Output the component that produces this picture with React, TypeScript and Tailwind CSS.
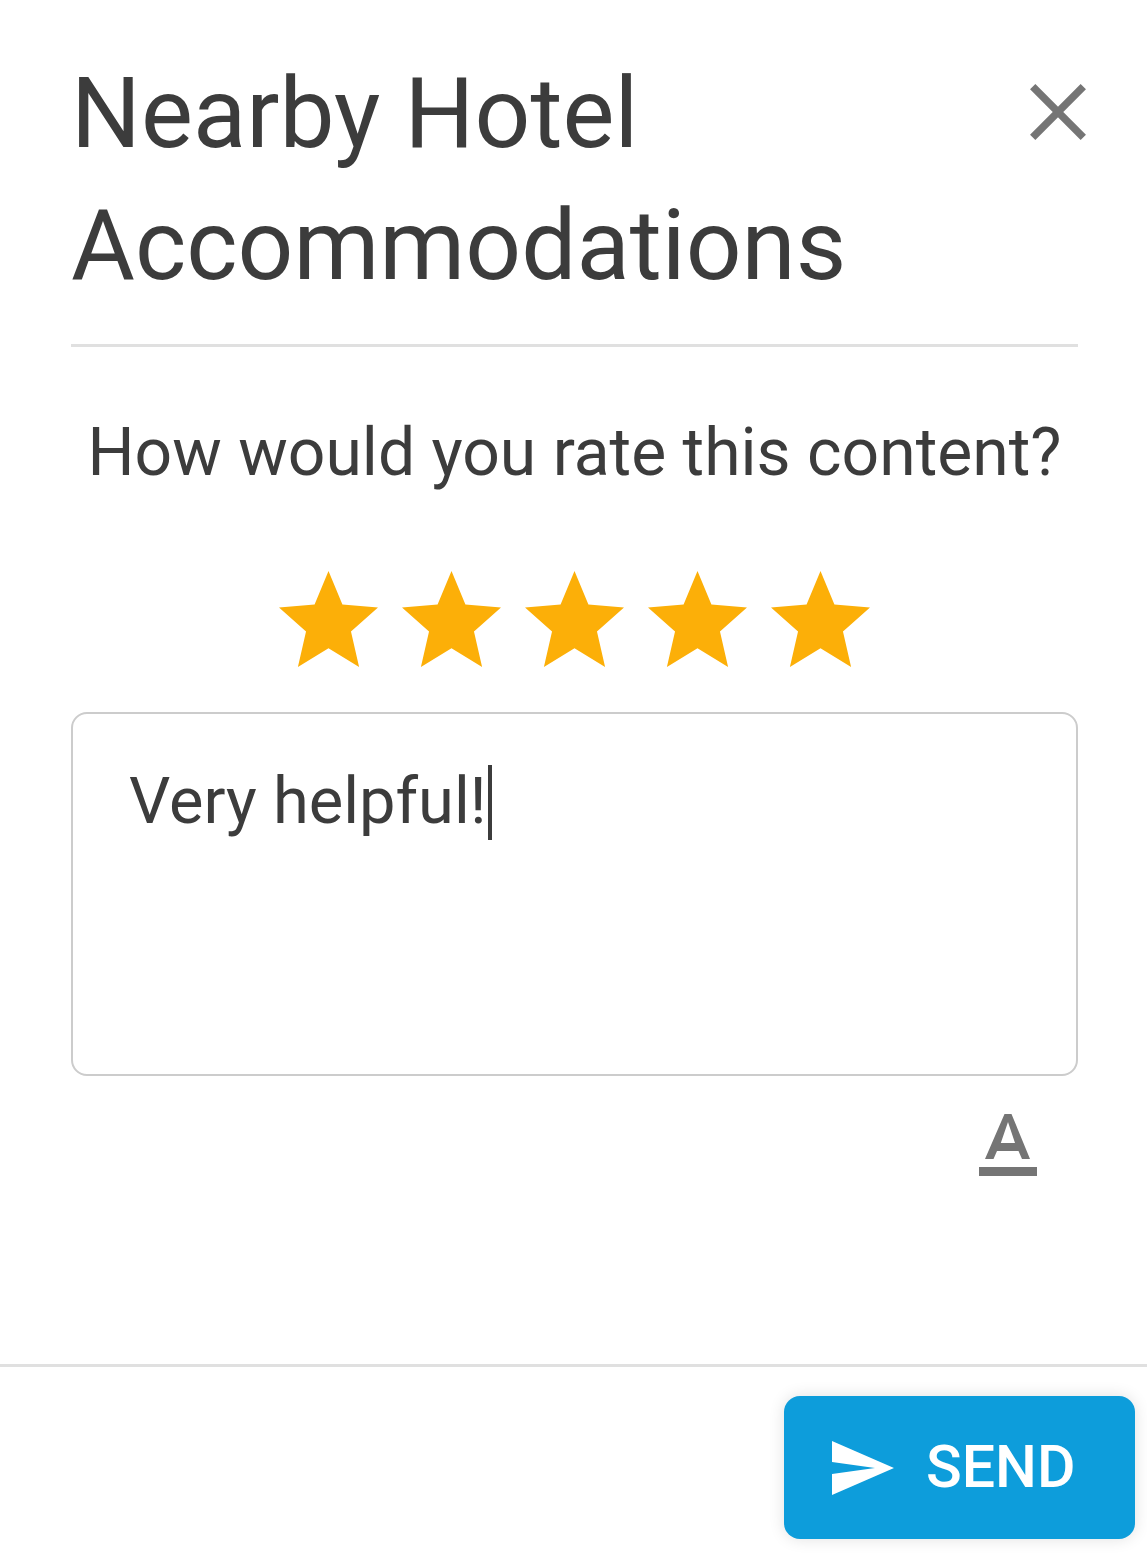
import { useState } from "react";

export default function App() {
  const [rating, setRating] = useState(5);
  const [focused, setFocused] = useState(false);
  return (
    <main className="bg-white font-['Roboto',sans-serif] text-[#3c3c3c]">
      <div className="pt-12 pr-[69px] pl-[71px]">
        <header className="flex items-start justify-between border-b-3 border-[#e0e0e0] pb-8">
          <h1 className="text-[98px] leading-[132px] font-normal">Nearby Hotel Accommodations</h1>
          <button type="button" aria-label="Close" className="-mr-2 mt-9 shrink-0">
            <svg viewBox="0 0 56 56" className="size-14" fill="none" stroke="#757575" strokeWidth="7.5">
              <path d="M2.7 2.7 53.3 53.3M53.3 2.7 2.7 53.3" />
            </svg>
          </button>
        </header>
        <h2 className="mt-16 text-center text-[66px] leading-[84px] font-normal">How would you rate this content?</h2>
        <div className="mt-19 flex justify-center gap-6">
          {[1, 2, 3, 4, 5].map((n) => (
            <button key={n} type="button" aria-label={`${n} stars`} onClick={() => setRating(n)}>
              <svg viewBox="2 2 20 19" className="h-24 w-[99px]" preserveAspectRatio="none" fill={n <= rating ? "#fcaf08" : "#e0e0e0"}>
                <path d="M12 17.27 18.18 21l-1.64-7.03L22 9.24l-7.19-.61L12 2 9.19 8.63 2 9.24l5.46 4.73L5.82 21z" />
              </svg>
            </button>
          ))}
        </div>
        <div className="relative mt-[45px]">
          <textarea
            aria-label="Comment"
            defaultValue="Very helpful!"
            onFocus={() => setFocused(true)}
            className="block h-[364px] w-full resize-none rounded-2xl border-2 border-[#ccc] px-14 py-[45px] text-[65px] leading-[84px] outline-none"
          />
          {!focused && <span className="pointer-events-none absolute top-[53px] left-[417px] h-[75px] w-1 bg-[#3c3c3c]" />}
        </div>
        <div className="mt-[38px] flex justify-end pr-[41px]">
          <button type="button" aria-label="Text color">
            <svg viewBox="0 0 58 62" className="h-[62px] w-[58px]" fill="#757575">
              <path d="M0 53H58V62H0Z" />
              <path fillRule="evenodd" d="M25.5 0H32.5L51 45H43L39.5 37H18L14.5 45H6ZM21.8 29H36L29 8Z" />
            </svg>
          </button>
        </div>
      </div>
      <footer className="mt-[188px] flex justify-end border-t-3 border-[#e0e0e0] pt-[29px] pr-3 pb-4">
        <button type="button" className="flex h-[143px] w-[351px] items-center gap-8 rounded-2xl bg-[#0d9ddb] pl-12 text-[59px] font-medium text-white shadow-[0_0_16px_rgba(0,0,0,0.12)]">
          <svg viewBox="0 0 62 54" className="h-[54px] w-[62px]" fill="white">
            <path d="M0 0 62 27 0 54V33L43 27 0 21Z" />
          </svg>
          SEND
        </button>
      </footer>
    </main>
  );
}
